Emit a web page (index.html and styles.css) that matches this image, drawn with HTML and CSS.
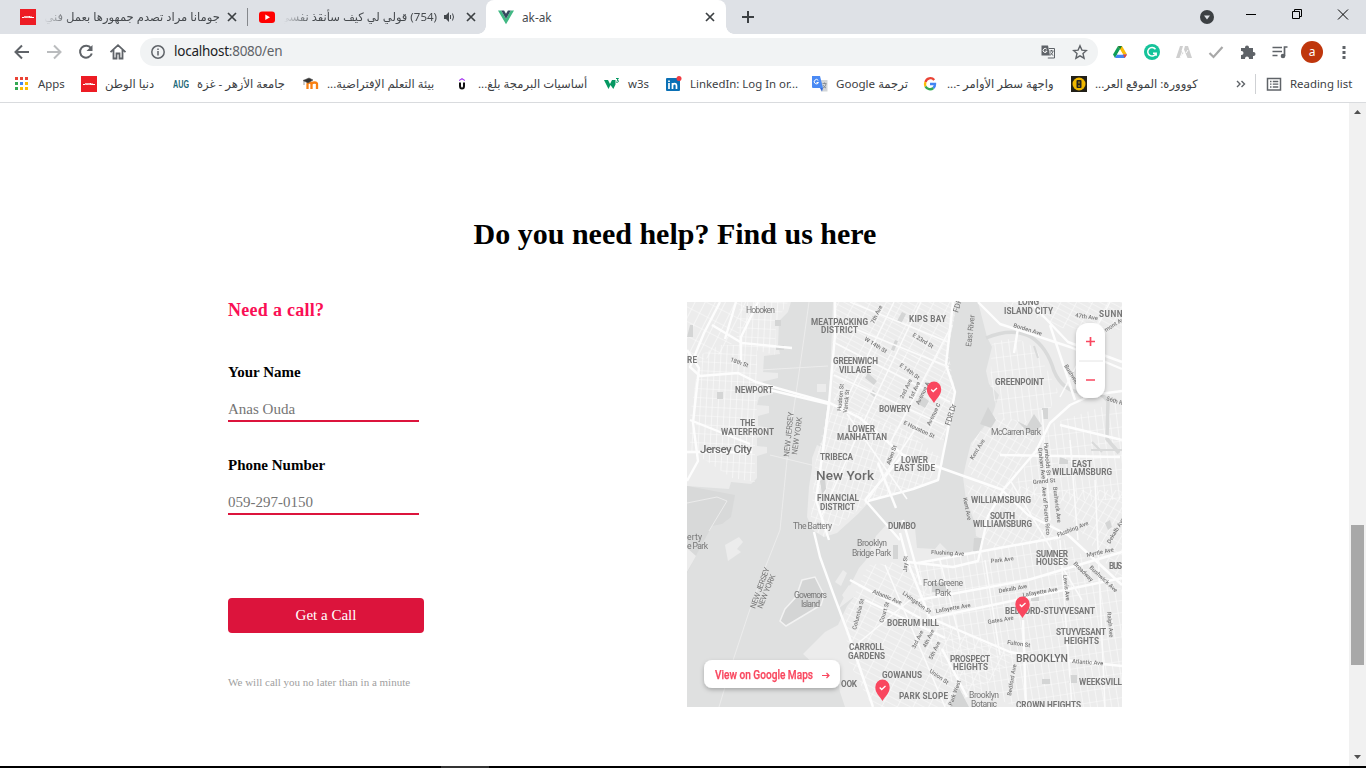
FILE: index.html
```html
<!DOCTYPE html>
<html lang="en">
<head>
<meta charset="utf-8">
<title>ak-ak</title>
<link rel="stylesheet" href="styles.css">
</head>
<body>
<div class="window">
  <header class="tabstrip">
    <div class="tab tab-one">
      <svg class="i16" viewBox="0 0 16 16"><rect width="16" height="16" fill="#ed1c24"/><path d="M2 8.500h2l1-1 1 1.200 1-1.200 1 1 1.500-1.500v1.500H14M4 8h8" stroke="#fff" fill="none"/></svg>
      <span class="tab-title" dir="rtl">جومانا مراد تصدم جمهورها بعمل فني</span>
      <svg class="x" viewBox="0 0 10 10"><path d="M1 1l8 8M9 1L1 9"/></svg>
    </div>
    <div class="tab tab-two">
      <svg class="i16" viewBox="0 0 16 16"><rect y="2.500" width="16" height="11.500" rx="3" fill="#f00"/><path d="M6.300 5.500v5.400l4.700-2.700z" fill="#fff"/></svg>
      <span class="tab-title" dir="rtl">(754) قولي لي كيف سأنقذ نفسي</span>
      <svg class="speaker" viewBox="0 0 12 12"><path d="M1 4h2l3-3v10L3 8H1z" fill="#45494d"/><path d="M7.500 4v4M9.500 2.500q2 3.500 0 7" stroke="#45494d" fill="none"/></svg>
      <svg class="x" viewBox="0 0 10 10"><path d="M1 1l8 8M9 1L1 9"/></svg>
    </div>
    <div class="tab tab-active">
      <svg class="i16" viewBox="0 0 16 16"><path d="M0 1.500h3.200L8 9.800l4.800-8.300H16L8 15.300z" fill="#41b883"/><path d="M3.200 1.500h2.900L8 4.800l1.900-3.300h2.900L8 9.800z" fill="#35495e"/></svg>
      <span class="tab-title">ak-ak</span>
      <svg class="x" viewBox="0 0 10 10"><path d="M1 1l8 8M9 1L1 9"/></svg>
    </div>
    <svg class="plus" viewBox="0 0 12 12"><path d="M6 0v12M0 6h12"/></svg>
    <div class="controls">
      <svg viewBox="0 0 46 34"><circle cx="23" cy="17" r="7" fill="#3c4043"/><path d="M20 15.500h6l-3 4z" fill="#dee1e6"/></svg>
      <svg viewBox="0 0 46 34"><path d="M18 14.500h10" stroke="#000"/></svg>
      <svg viewBox="0 0 46 34"><path d="M18.500 11.500h7v7h-7zM20.500 11v-1.500h7v7H26" stroke="#000" fill="none"/></svg>
      <svg viewBox="0 0 46 34"><path d="M18 9.500l10 10M28 9.500l-10 10" stroke="#000"/></svg>
    </div>
  </header>

  <div class="toolbar">
    <svg class="cell" viewBox="0 0 32 32"><path d="M23 16H10M16 9.500L9.500 16l6.500 6.500" class="nav"/></svg>
    <svg class="cell" viewBox="0 0 32 32"><path d="M9 16h13M16 9.500l6.500 6.500-6.500 6.500" class="nav off"/></svg>
    <svg class="cell" viewBox="0 0 32 32"><path d="M21 12.200a6 6 0 1 0 .8 5.300" class="nav"/><path d="M22.500 9v6h-6z" fill="#5f6368"/></svg>
    <svg class="cell" viewBox="0 0 32 32"><path d="M8.500 16.200L16 9.200l7.500 7M11.500 14v8.500h3v-5h3v5h3V14" class="nav thin"/></svg>
    <div class="omnibox">
      <svg class="info" viewBox="0 0 16 16"><circle cx="8" cy="8" r="6.200" fill="none" stroke="#5f6368" stroke-width="1.500"/><path d="M8 7v4.500M8 4.500v1.500" stroke="#5f6368" stroke-width="1.500"/></svg>
      <span class="url"><b>localhost</b>:8080/en</span>
      <svg class="omni-icon" viewBox="0 0 16 16"><path d="M1.500 1.500h6.500l2 10H1.500z" fill="#5f6368"/><path d="M8.800 4.500h5.700v9.500H7.800M9.500 7h4M11.500 6v1M13 7.300q-1 3-3 4M10.500 8.500q1 2 2.800 3" stroke="#5f6368" fill="none"/><path d="M6.700 5.200A2 2 0 1 0 7 7.200H5.300" stroke="#fff" fill="none"/></svg>
      <svg class="omni-icon" viewBox="0 0 16 16"><path d="M8 1.800l1.900 4.300 4.600.4-3.500 3.100 1.100 4.600L8 11.800l-4.100 2.400L5 9.600 1.500 6.500l4.600-.4z" fill="none" stroke="#5f6368" stroke-width="1.400"/></svg>
    </div>
    <svg class="cell" viewBox="0 0 32 32"><path d="M14 10h4l5 8.500h-4z" fill="#fbbc04"/><path d="M14 10l2 3.500-5 8.500-2-3.500z" fill="#0f9d58"/><path d="M13 18.500H23L20.700 22H11z" fill="#4285f4"/><path d="M14 10h4l-2 3.500z" fill="#188038"/><path d="M20.700 22L19 18.500h4z" fill="#ea4335"/><path d="M16 13.500l3 5h-6z" fill="#fff"/></svg>
    <svg class="cell" viewBox="0 0 32 32"><circle cx="16" cy="16" r="8" fill="#15c39a"/><path d="M19.500 13.200a4.300 4.300 0 1 0 .6 4H17M20.200 17.200v2.500" stroke="#fff" stroke-width="1.500" fill="none"/></svg>
    <svg class="cell" viewBox="0 0 32 32"><path d="M12 10h3l-1.500 5 2 2-2 2-1 3H8zM17 10h3l4 12h-4.500L16 13.500z" fill="#cfcfcf"/><path d="M15 14l-3 8M20 14l-2 3" stroke="#fff"/></svg>
    <svg class="cell" viewBox="0 0 32 32"><path d="M9.500 17l4 4L22.500 11" stroke="#a8a8a8" stroke-width="2.200" fill="none"/></svg>
    <svg class="cell" viewBox="0 0 32 32"><path d="M9 12h4v-.5a2 2 0 0 1 4 0v.5h4v4h.5a2 2 0 0 1 0 4H21v3h-4v-.5a2 2 0 0 0-4 0v.5H9v-4h.5a2 2 0 0 0 0-4H9z" fill="#5f6368"/></svg>
    <svg class="cell" viewBox="0 0 32 32"><path d="M8.500 11.500h9.500M8.500 15.500h9.500M8.500 19.500h5M20.500 20v-9h3" stroke="#5f6368" stroke-width="1.700" fill="none"/><circle cx="19" cy="20" r="2.300" fill="#5f6368"/></svg>
    <span class="avatar">a</span>
    <svg class="cell" viewBox="0 0 32 32"><path d="M14.500 10h3v3h-3zM14.500 15h3v3h-3zM14.500 20h3v3h-3z" fill="#5f6368"/></svg>
  </div>

  <nav class="bookmarks">
    <a class="bm"><svg class="i16" viewBox="0 0 16 16"><path d="M1 1h3v3H1zM6 1h3v3H6zM11 1h3v3h-3z" fill="#ea4335"/><path d="M1 6h3v3H1z" fill="#34a853"/><path d="M6 6h3v3H6z" fill="#4285f4"/><path d="M11 6h3v3h-3z" fill="#fbbc04"/><path d="M1 11h3v3H1z" fill="#34a853"/><path d="M6 11h3v3H6zM11 11h3v3h-3z" fill="#fbbc04"/></svg><span>Apps</span></a>
    <a class="bm"><svg class="i16" viewBox="0 0 16 16"><rect width="16" height="16" fill="#ed1c24"/><path d="M2 8.500h2l1-1 1 1.200 1-1.200 1 1 1.500-1.500v1.500H14M4 8h8" stroke="#fff" fill="none"/></svg><span dir="rtl">دنيا الوطن</span></a>
    <a class="bm"><svg class="i16" viewBox="0 0 16 16"><text x="0" y="12" textLength="16" lengthAdjust="spacingAndGlyphs" class="aug">AUG</text></svg><span dir="rtl">جامعة الأزهر - غزة</span></a>
    <a class="bm"><svg class="i16" viewBox="0 0 16 16"><path d="M4.500 13V8.500q0-2 2-2t2 2V13M8.500 8.500q0-2 3-2T14 9v4" stroke="#f98012" stroke-width="2.300" fill="none"/><path d="M0 4.500L6 2l4 2-5 3zM1 5v4" fill="#333" stroke="#555" stroke-width=".6"/></svg><span dir="rtl">بيئة التعلم الإفتراضية...</span></a>
    <a class="bm"><svg class="i16 udemy" viewBox="0 0 16 16"><path d="M3 5V4l3-2 3 2v1L6 3.500z" fill="#a435f0"/><path d="M4 6.500V10q0 2.500 2 2.500T8 10V6.500" stroke="#111" stroke-width="2" fill="none"/></svg><span dir="rtl">أساسيات البرمجة بلغ...</span></a>
    <a class="bm"><svg class="i16" viewBox="0 0 16 16"><path d="M0 4h4l2 4 2-4h3.500v4.500L9.300 13 6.500 9 4.500 13z" fill="#059862"/><path d="M12 2.500h2.500L13 4.200q2 0 1.300 1.600-.8 1-2.300.2" stroke="#059862" fill="none"/></svg><span>w3s</span></a>
    <a class="bm"><svg class="i16" viewBox="0 0 16 16"><rect y="2" width="14" height="13" rx="1" fill="#0b70b5"/><path d="M3 7v6M3 4.500V6M6.500 13V7M6.500 10q0-2.300 2-2.300t2 2.300v3" stroke="#fff" stroke-width="1.700" fill="none"/><circle cx="13" cy="2.500" r="2.500" fill="#f03b42"/></svg><span>LinkedIn: Log In or...</span></a>
    <a class="bm"><svg class="i16" viewBox="0 0 16 16"><path d="M7 4h8.500v11.500H9z" fill="#d2d5d8"/><path d="M0 0h8l3 12H1q-1 0-1-1z" fill="#4a8af4"/><path d="M8 12h3l-1 3.500z" fill="#3267d6"/><path d="M6.300 4.500a2.200 2.200 0 1 0 .2 2H4.500" stroke="#fff" fill="none"/><path d="M10.500 7.500h4M12.500 6.500v1M14 8q-.5 3-3 4M11 9q1 2 3 3" stroke="#788088" stroke-width=".8" fill="none"/></svg><span dir="rtl">ترجمة Google</span></a>
    <a class="bm"><svg class="i16" viewBox="0 0 16 16"><g fill="none" stroke-width="2.400"><path d="M11.200 4A5 5 0 0 0 2.500 6" stroke="#ea4335"/><path d="M2.500 6a5 5 0 0 0 0 4.500" stroke="#fbbc05"/><path d="M2.500 10.500A5 5 0 0 0 10.300 12" stroke="#34a853"/><path d="M10.300 12a5 5 0 0 0 1.700-4H7" stroke="#4285f4"/></g></svg><span dir="rtl">واجهة سطر الأوامر -...</span></a>
    <a class="bm"><svg class="i16" viewBox="0 0 16 16"><rect width="16" height="16" fill="#211f17"/><circle cx="8" cy="8" r="6.500" fill="#efb700"/><rect x="5.500" y="4" width="5" height="8" rx="1" fill="#222"/><path d="M8 5.500v2M8 9v2" stroke="#efb700"/></svg><span dir="rtl">كووورة: الموقع العر...</span></a>
    <svg class="more" viewBox="0 0 10 8"><path d="M1 1l3 3-3 3M5.500 1l3 3-3 3"/></svg>
    <a class="bm reading"><svg class="i16" viewBox="0 0 16 16"><rect x="1.500" y="2.500" width="13" height="11.500" fill="none" stroke="#5f6368" stroke-width="1.500"/><path d="M4 5.500h1.500M4 8.200h1.500M4 11h1.500M6.800 5.500h5.500M6.800 8.200h5.500M6.800 11h5.500" stroke="#5f6368" stroke-width="1.300"/></svg><span>Reading list</span></a>
  </nav>

  <div class="viewport">
    <main class="page">
      <h1 class="title">Do you need help? Find us here</h1>
      <div class="columns">
        <form class="form">
          <h2 class="need">Need a call?</h2>
          <label class="label" for="name">Your Name</label>
          <input class="field" id="name" placeholder="Anas Ouda">
          <label class="label" for="phone">Phone Number</label>
          <input class="field" id="phone" placeholder="059-297-0150">
          <button class="call" type="button">Get a Call</button>
          <p class="note">We will call you no later than in a minute</p>
        </form>
        <svg class="map" viewBox="687 301 435 406">
          <defs>
            <pattern id="nj" width="6" height="9" patternUnits="userSpaceOnUse" patternTransform="rotate(3)"><path d="M0 0H6M0 0V9" class="street"/></pattern>
            <pattern id="west" width="9" height="13" patternUnits="userSpaceOnUse" patternTransform="rotate(27)"><path d="M0 0H9M0 0V13" class="street"/></pattern>
            <pattern id="mid" width="14" height="5" patternUnits="userSpaceOnUse" patternTransform="rotate(28)"><path d="M0 0H14M0 0V5" class="street"/></pattern>
            <pattern id="low" width="6" height="8" patternUnits="userSpaceOnUse" patternTransform="rotate(18)"><path d="M0 0H6M0 0V8" class="street"/></pattern>
            <pattern id="green" width="7" height="14" patternUnits="userSpaceOnUse" patternTransform="rotate(-7)"><path d="M0 0H7M0 0V14" class="street"/></pattern>
            <pattern id="will" width="7" height="9" patternUnits="userSpaceOnUse" patternTransform="rotate(30)"><path d="M0 0H7M0 0V9" class="street"/></pattern>
            <pattern id="bed" width="7" height="12" patternUnits="userSpaceOnUse" patternTransform="rotate(-9)"><path d="M0 0H7M0 0V12" class="street"/></pattern>
            <pattern id="slope" width="14" height="6" patternUnits="userSpaceOnUse" patternTransform="rotate(27)"><path d="M0 0H14M0 0V6" class="street"/></pattern>
            <filter id="shadow" x="-20%" y="-20%" width="140%" height="160%"><feDropShadow dx="0" dy="2" stdDeviation="2" flood-color="#000" flood-opacity=".25"/></filter>
            <g id="pin"><path d="M0 11C-3 6-7.200 3-7.200-2.800A7.200 7.600 0 0 1 7.200-2.800C7.200 3 3 6 0 11z" fill="#f9475f"/><path d="M-2.800-2.500l2 2 3.800-3.500" stroke="#fff" stroke-width="1.300" fill="none"/></g>
          </defs>
          <g class="soft">
            <rect x="687" y="302" width="435" height="405" fill="#dfe0e0"/>
            <g fill="#ececec">
              <path d="M687 302H791L788 312 779 321 778 345 780 354 764 356 763 372 778 373V378L761 382V388L773 389V394L759 397 757 405 769 406V413L758 416V426L770 428V434L757 438V446L767 447V453L757 456V478L751 484 731 482 729 489 687 486z"/>
              <path d="M687 486L735 495 731 517 722 524 712 526 700 548 687 573z" fill="#d8d9d9"/>
              <path d="M687 548L696 556 687 572z"/>
              <path d="M833 302H957L948 350 946 365 954 383 955 397 950 420 944 440 943 463 936 481 925 486 898 491 871 500 858 514 837 533 824 537 814 531 807 517 809 487 812 468 812 458 817 445 824 448 829 403z"/>
              <path d="M978 302H1122V707H845L840 692 838 680 818 668 803 654 825 632 838 625 847 606 855 596 838 609 859 568 866 560 876 536 887 524 902 520 915 528 917 548 935 549 940 543 949 552 970 552 982 546 984 540 976 536 975 523 966 500 963 477 966 463 971 443 982 430 993 413 999 395 989 384 986 371 992 347 987 337z"/>
            </g>
            <path d="M687 302H760L726 352 687 365z" fill="url(#west)"/>
            <path d="M740 302H788L776 322 775 355 736 345zM720 345H757V410L705 440 690 415 700 355zM690 430L755 405 755 482 732 478 690 450z" fill="url(#nj)"/>
            <path d="M836 302H957L946 365 850 360 833 342z" fill="url(#mid)"/>
            <path d="M832 355H949L955 397 944 440 905 440 834 405z" fill="url(#mid)"/>
            <path d="M829 403L905 430 943 460 925 486 871 500 824 537 810 528 815 465z" fill="url(#low)"/>
            <path d="M992 344Q1018 331 1037 351L1058 391 1045 422 1000 420 990 385z" fill="url(#green)"/>
            <path d="M991 417L1045 423 1006 490 967 473 973 441z" fill="url(#will)"/>
            <path d="M1048 425L1122 400V500H1006z" fill="url(#green)"/>
            <path d="M966 485L1040 487 1059 540 990 550 975 520z" fill="url(#will)"/>
            <path d="M917 562L1060 536 1122 590V707H1018L951 682 920 625z" fill="url(#bed)"/>
            <path d="M1048 490H1122V584z" fill="url(#will)"/>
            <path d="M868 565L915 560 940 620 1018 656 960 707H872L848 660 845 615z" fill="url(#slope)"/>
            <path d="M1000 302H1122V330L1060 328z" fill="url(#mid)"/>
            <path d="M986 338Q1012 327 1031 337 1047 347 1054 371 1063 392 1082 392 1102 391 1108 401L1107 439 1119 453" fill="none" stroke="#d9dada" stroke-width="3.500"/>
            <path d="M1034 346l4 12M1092 442l10 10M1091 450h31" stroke="#d9dada" stroke-width="2"/>
            <g fill="#d4d5d5">
              <path d="M717 392h6v7h-6zM775 320h6v6h-6zM776 345h8v5h-8zM868 373l9 8-3 4-9-7zM873 390l4 4-3 3-4-4zM922 396l7 5-4 7-7-4zM988 407l-8 17 11 4 5-8zM1017 421l13 13 12-8-8-12-7 12z"/>
              <path d="M1042 408h6v11h-6zM1060 457l8 3v4h-9zM974 538h10l-4 16-7-3zM932 583h15v9h-15zM950 707l9-19 10 19zM1069 675h8v8h-8zM1031 596h8v5h-8zM1105 523l5-3 2 7-4 3zM1042 679h8v5h-8zM690 325h3v12h-6zM893 545h5v14h-5z"/>
              <path d="M802 580l13-3 9 18-3 10-20 12-15 9-6-5 5-12 11-12z"/>
              <path d="M901 324l5-10-4-2-5 9zM894 351l4-10-3-1-4 10zM820 481l5-4 1 12-4 5z"/>
            </g>
            <g fill="#ececec"><path d="M725 545l14-8 4 5-6 7 4 3-13 9zM817 384h9v8h-9zM835 582l8-12 4 3-6 13zM842 595l7-10 4 3-8 12z"/></g>
            <path d="M802 580l13-3 9 18-3 10-20 12-15 9-6-5 5-12 11-12z" fill="none" stroke="#f2f2f2" stroke-width="1.500"/>
            <path d="M809 302Q799 375 789 440 784 490 780 530 747 610 719 707M687 503l30-6 10 4-18 30M770 455l50 12M760 370l68-4" fill="none" stroke="#ededed" stroke-width=".9"/>
            <g class="road">
              <path d="M720 302L704 333 690 367 700 376 738 373 756 382 830 403 860 418 903 455 941 468 1003 490 1036 451 1050 423 1070 405 1092 395 1122 391"/>
              <path d="M756 387L774 391 829 404 823 450 816 500 829 540 M814 532L820 557 833 593 848 633 873 707"/>
              <path d="M953 302L946 365 955 392 946 440 938 480 913 489 868 501M835 302V335L829 403 823 450M865 500L900 540M878 463l18 45M903 455l-38 45"/>
              <path d="M687 350l12 18-6 55 5 38-11 20M712 325l30 18 50 5M736 302l-11 37M690 420l60 24M687 452h65M758 302l-17 35v25"/>
              <path d="M978 302l22 22 70 23 52 22M1018 328l-4 25M1003 491l25 24 40 20 54 50M1003 491l-15 25-10 45-25 6-45-5M900 533l8 30 22 55 80 34 35 6 77 8M918 563l142-26M920 618l-70-38M942 649l25 48M918 600l110-20 94-28M930 618l192-40M1023 620l3 87M865 600l80 38M903 520l18 65M1030 302l38 40 54 20M1050 325l25 75M1060 425l62 15M1000 455l120 2"/>
            </g>
            <path class="avenue" d="M840 412l54-110M863 423l58-121M889 445l63-120M833 342l117 60M838 322l111 45M850 302l98 40M834 375l110 50M868 500l50-75M862 425l-40 90M847 414l60 85M885 565l60 142M850 650l60-50M1010 480l72 120M1042 410l8 110M1070 440l8 100M1095 480l10 227M1060 540l12 167M940 560l20 80M985 560l15 95M1110 302l-50 95"/>
            <g class="lbl area">
              <text x="811" y="325" textLength="57">MEATPACKING</text><text x="821" y="333" textLength="37">DISTRICT</text>
              <text x="909" y="321.500" textLength="37">KIPS BAY</text><text x="1018" y="304.800" textLength="21">LONG</text><text x="1004" y="313.500" textLength="49">ISLAND CITY</text><text x="1099" y="316.500" textLength="29">SUNNY</text>
              <text x="687" y="362.500" textLength="10">RE</text><text x="833" y="364" textLength="45">GREENWICH</text><text x="839" y="372.500" textLength="32">VILLAGE</text>
              <text x="735" y="392.500" textLength="38">NEWPORT</text><text x="879" y="412" textLength="32">BOWERY</text><text x="995" y="384.500" textLength="49">GREENPOINT</text>
              <text x="740" y="426" textLength="15">THE</text><text x="721" y="434.500" textLength="53">WATERFRONT</text><text x="848" y="431.500" textLength="27">LOWER</text><text x="837" y="439.500" textLength="50">MANHATTAN</text>
              <text x="820" y="460" textLength="33">TRIBECA</text><text x="901" y="462.500" textLength="27">LOWER</text><text x="894" y="471" textLength="41">EAST SIDE</text><text x="1072" y="466.500" textLength="20">EAST</text><text x="1052" y="475" textLength="60">WILLIAMSBURG</text>
              <text x="817" y="501" textLength="42">FINANCIAL</text><text x="820" y="509.500" textLength="35">DISTRICT</text><text x="971" y="503" textLength="60">WILLIAMSBURG</text><text x="990" y="518.500" textLength="25">SOUTH</text><text x="973" y="527" textLength="59">WILLIAMSBURG</text>
              <text x="888" y="528.500" textLength="28">DUMBO</text><text x="1036" y="556.500" textLength="32">SUMNER</text><text x="1036" y="565" textLength="32">HOUSES</text><text x="1109" y="568.500" textLength="13">BUS</text>
              <text x="887" y="626" textLength="52">BOERUM HILL</text><text x="1005" y="613.500" textLength="90">BEDFORD-STUYVESANT</text><text x="1056" y="635" textLength="50">STUYVESANT</text><text x="1064" y="643.500" textLength="35">HEIGHTS</text>
              <text x="849" y="650" textLength="35">CARROLL</text><text x="848" y="658.500" textLength="37">GARDENS</text><text x="950" y="661.500" textLength="40">PROSPECT</text><text x="953" y="669.500" textLength="35">HEIGHTS</text><text x="882" y="678" textLength="40">GOWANUS</text><text x="841" y="687" textLength="16">OOK</text>
              <text x="899" y="699" textLength="49">PARK SLOPE</text><text x="1079" y="684.500" textLength="43">WEEKSVILL</text><text x="1016" y="707.500" textLength="65">CROWN HEIGHTS</text>
            </g>
            <g class="lbl city"><text x="700" y="453" font-size="11.500" textLength="52">Jersey City</text><text x="816" y="480" font-size="13.500" textLength="58">New York</text><text x="1016" y="662" font-size="10.500" textLength="52">BROOKLYN</text></g>
            <g class="lbl park">
              <text x="746" y="313" textLength="29">Hoboken</text><text x="991" y="434.500" textLength="50">McCarren Park</text><text x="793" y="529" textLength="39">The Battery</text><text x="857" y="545.500" textLength="30">Brooklyn</text><text x="852" y="555.500" textLength="39">Bridge Park</text><text x="687" y="539.500" textLength="15">erty</text><text x="687" y="549" textLength="21">e Park</text><text x="923" y="586" textLength="40">Fort Greene</text><text x="935" y="596" textLength="16">Park</text><text x="794" y="597.500" textLength="33">Governors</text><text x="801" y="606.500" textLength="19">Island</text><text x="969" y="698" textLength="30">Brooklyn</text><text x="971" y="707" textLength="26">Botanic</text>
            </g>
            <g class="lbl state">
              <text transform="translate(789 457) rotate(-84)" textLength="45">NEW JERSEY</text><text transform="translate(797 455) rotate(-82)" textLength="38">NEW YORK</text><text transform="translate(755 609) rotate(-70)" textLength="43">NEW JERSEY</text><text transform="translate(762 609) rotate(-68)" textLength="36">NEW YORK</text>
              <text transform="translate(971 347) rotate(-83)" textLength="32">East River</text><text transform="translate(950 426) rotate(-73)" textLength="22">FDR Dr</text><text transform="translate(958 313) rotate(-73)">FDR</text>
            </g>
            <g class="lbl st">
              <text transform="translate(730 361) rotate(20)">18th St</text><text transform="translate(874 324) rotate(-64)">7th Ave</text><text transform="translate(864 340) rotate(32)">W 14th St</text><text transform="translate(912 336) rotate(32)">E 23rd St</text><text transform="translate(899 366) rotate(36)">E 14th St</text><text transform="translate(903 399) rotate(-64)">2nd Ave</text><text transform="translate(912 400) rotate(-64)">1st Ave</text><text transform="translate(919 405) rotate(-64)">Avenue A</text><text transform="translate(930 426) rotate(-64)">Avenue C</text><text transform="translate(903 424) rotate(25)">E Houston St</text>
              <text transform="translate(841 411) rotate(-84)">Hudson St</text><text transform="translate(847 413) rotate(-84)">Varick St</text><text transform="translate(890 465) rotate(-70)">Allen St</text><text transform="translate(1013 327) rotate(17)">Borden Ave</text><text transform="translate(1075 317) rotate(8)">47th Ave</text><text transform="translate(1106 332) rotate(-32)">mont Ave</text><text transform="translate(1064 366) rotate(58)">Bushwick</text><text transform="translate(1106 400) rotate(18)">56th Rd</text>
              <text transform="translate(973 460) rotate(-58)">Kent Ave</text><text transform="translate(1044 443) rotate(85)">Humboldt St</text><text transform="translate(1038 448) rotate(83)">Graham Ave</text><text transform="translate(1033 484) rotate(-5)">Grand St</text><text transform="translate(1042 487) rotate(85)">Ave of Puerto Rico</text><text transform="translate(1053 487) rotate(83)">Bushwick Ave</text><text transform="translate(963 498) rotate(78)">Kent Ave</text><text transform="translate(1058 537) rotate(-22)">Flushing Ave</text><text transform="translate(1110 544) rotate(-59)">Dekalb Ave</text>
              <text transform="translate(931 554) rotate(3)">Flushing Ave</text><text transform="translate(991 563) rotate(-7)">Park Ave</text><text transform="translate(1087 557) rotate(-12)">Myrtle Ave</text><text transform="translate(1073 564) rotate(45)">Broadway</text><text transform="translate(1089 568) rotate(43)">Bushwick Ave</text><text transform="translate(999 593) rotate(-10)">Dekalb Ave</text><text transform="translate(1023 597) rotate(-10)">Lafayette Ave</text><text transform="translate(936 613) rotate(-10)">Lafayette Ave</text><text transform="translate(988 624) rotate(-10)">Gates Ave</text><text transform="translate(1063 575) rotate(83)">Lewis Ave</text><text transform="translate(1107 612) rotate(84)">Ralph Ave</text>
              <text transform="translate(902 594) rotate(36)">Livingston St</text><text transform="translate(872 593) rotate(22)">Atlantic Ave</text><text transform="translate(856 630) rotate(-75)">Columbia St</text><text transform="translate(883 623) rotate(-73)">Court St</text><text transform="translate(907 572) rotate(-88)">Jay St</text><text transform="translate(915 649) rotate(-64)">3rd Ave</text><text transform="translate(926 648) rotate(-64)">4th Ave</text><text transform="translate(932 660) rotate(-64)">5th Ave</text><text transform="translate(929 672) rotate(35)">Union St</text><text transform="translate(1007 644) rotate(8)">Fulton St</text><text transform="translate(1072 663) rotate(4)">Atlantic Ave</text><text transform="translate(1011 696) rotate(-80)">Bedford Ave</text><text transform="translate(952 706) rotate(-70)">Park West</text>
            </g>
            <g filter="url(#shadow)"><rect x="1076" y="323" width="29" height="75" rx="12" fill="#fff"/><rect x="704" y="660" width="136" height="28" rx="8" fill="#fff"/></g>
            <path d="M1079 361h24" stroke="#e4e4e4"/><path d="M1086 341.500h9M1090.500 337v9M1086 380h9" stroke="#f9475f" stroke-width="1.700"/>
            <text x="715" y="679" textLength="98" lengthAdjust="spacingAndGlyphs" class="view">View on Google Maps</text>
            <path d="M822 675.500h7M826.500 673l2.500 2.500-2.500 2.500" fill="none" stroke="#f9475f" stroke-width="1.200"/>
            <use href="#pin" x="934" y="392"/><use href="#pin" x="1022.500" y="607"/><use href="#pin" x="882.500" y="690"/>
          </g>
        </svg>
      </div>
    </main>
    <div class="scrollbar"><svg viewBox="0 0 17 17"><path d="M5 11h7L8.500 7z" fill="#505050"/></svg><i class="thumb"></i><svg viewBox="0 0 17 17"><path d="M5 6h7l-3.500 4z" fill="#505050"/></svg></div>
  </div>
  <footer class="taskbar"><i></i></footer>
</div>
</body>
</html>
```
FILE: styles.css
```css
* { box-sizing: border-box; }
body { margin: 0; background: #fff; overflow: hidden; font-family: "Liberation Serif", serif; }
.window { width: 1366px; height: 768px; display: flex; flex-direction: column; }
svg { display: block; flex: none; }
.i16 { width: 16px; height: 16px; }

.tabstrip { height: 34px; flex: none; background: #dee1e6; display: flex; align-items: center; font: 12px "Noto Sans", "DejaVu Sans", sans-serif; color: #45494d; }
.tab { height: 34px; display: flex; align-items: center; }
.tab-title { white-space: nowrap; overflow: hidden; height: 20px; line-height: 20px; }
.tab-one { width: 248px; padding-left: 20px; background: linear-gradient(#85888c, #85888c) right 8px / 1px 18px no-repeat; }
.tab-one .tab-title { width: 176px; margin: 0 7px 0 8px; font-size: 11.600px; }
.tab-two { width: 238px; padding-left: 11px; }
.tab-two .tab-title { width: 153px; margin: 0 6px 0 9px; font-size: 11.500px; }
.tab-one .tab-title, .tab-two .tab-title { mask-image: linear-gradient(to right, transparent, #000 28px); }
.speaker { width: 12px; height: 12px; margin-right: 11px; }
.tab-active { width: 240px; height: 34px; padding-left: 12px; background: #fff; border-radius: 8px 8px 0 0; position: relative; }
.tab-active::before, .tab-active::after { content: ""; position: absolute; bottom: 0; width: 8px; height: 8px; }
.tab-active::before { left: -8px; background: radial-gradient(circle at 0 0, #dee1e6 7.500px, #fff 8px); }
.tab-active::after { right: -8px; background: radial-gradient(circle at 100% 0, #dee1e6 7.500px, #fff 8px); }
.tab-active .tab-title { width: 175px; margin: 0 8px; font-size: 11.800px; }
.x { width: 10px; height: 10px; stroke: #3c4043; stroke-width: 1.700; }
.plus { width: 12px; height: 12px; margin-left: 16px; stroke: #3c4043; stroke-width: 2; }
.controls { margin-left: auto; display: flex; }
.controls svg { width: 46px; height: 34px; }
.controls svg:first-child { margin-right: -2px; }

.toolbar { height: 36px; flex: none; display: flex; align-items: center; padding: 0 6px; }
.cell { width: 32px; height: 32px; }
.nav { fill: none; stroke: #5f6368; stroke-width: 2; }
.off { stroke: #babcbe; }
.thin { stroke-width: 1.800; }
.omnibox { width: 958px; height: 28px; margin: 0 6px; padding: 0 10px; border-radius: 14px; background: #f1f3f4; display: flex; align-items: center; }
.info { width: 16px; height: 16px; margin-right: 8px; }
.url { flex: 1; color: #5f6368; font: 13.500px/19px "Noto Sans", sans-serif; letter-spacing: -.25px; padding-bottom: 1px; }
.url b { font-weight: 400; color: #202124; }
.omni-icon { width: 16px; height: 16px; margin-left: 16px; }
.avatar { width: 22px; height: 22px; margin: 0 5px; border-radius: 50%; background: #bf360c; color: #fff; text-align: center; font: 12px/21px "Noto Sans", sans-serif; }

.bookmarks { height: 33px; flex: none; border-bottom: 1px solid #d9dbde; padding-bottom: 5px; display: grid; grid-template-columns: 67px 92px 130px 151px 150px 62px 146px 111px 148px 165px 19px 112px; align-items: center; padding-left: 14px; color: #3c4043; font: 11.400px "Noto Sans", "DejaVu Sans", sans-serif; }
.bm { display: flex; align-items: center; gap: 8px; white-space: nowrap; height: 20px; }
.bm span[dir] { font-size: 11.600px; }
.udemy { margin-left: 2px; margin-right: -2px; }
.aug { font: bold 11px "Liberation Sans", sans-serif; fill: #1b6878; }
.more { width: 10px; height: 8px; fill: none; stroke: #5f6368; stroke-width: 1.400; }
.reading { border-left: 1px solid #cfd1d4; padding-left: 10px; }

.viewport { flex: 1; display: flex; min-height: 0; }
.page { width: 1349px; padding: 113px 227px 0 228px; }
.title { margin: 0; text-align: center; font-size: 30px; line-height: 36px; }
.columns { display: flex; justify-content: space-between; padding-top: 49px; }
.form { width: 196px; display: flex; flex-direction: column; align-items: flex-start; }
.need { margin: -1px 0 43px; font-size: 18px; letter-spacing: .28px; line-height: 20px; color: #fa0f55; }
.label { font-size: 15px; font-weight: bold; line-height: 18px; margin-bottom: 17px; }
.field { width: 191px; height: 24px; padding: 1px 0 0; margin-bottom: 34px; border: 0; border-bottom: 2px solid #dc143c; font: 15px "Liberation Serif", serif; }
.field::placeholder { color: #757575; }
.call { width: 196px; height: 35px; margin: 49px 0 43px; padding: 0; border: 0; border-radius: 4px; background: #dc143c; color: #fff; font: 15px "Liberation Serif", serif; }
.note { margin: 0; font-size: 11px; line-height: 13px; color: #a0a0a0; white-space: nowrap; }
.map { width: 435px; height: 406px; }
.soft { filter: blur(.35px); }
.street { stroke: #fcfcfc; stroke-width: 1.200; fill: none; }
.road { stroke: #fdfdfd; stroke-width: 2.400; fill: none; stroke-linejoin: round; }
.avenue { stroke: #fbfbfb; stroke-width: 1.500; fill: none; }
.lbl { font-family: Roboto, sans-serif; fill: #777; }
.area { font-size: 8.200px; font-weight: 700; }
.city { font-weight: 500; fill: #6c6c6c; }
.park { font-size: 8.600px; }
.state { font-size: 7.800px; }
.st { font-size: 5.800px; font-weight: 500; }
.view { font: 500 12px Roboto, sans-serif; fill: #f9475f; stroke: #f9475f; stroke-width: .25px; }

.scrollbar { width: 17px; background: #f1f1f1; display: flex; flex-direction: column; }
.scrollbar svg { width: 17px; height: 17px; }
.thumb { width: 13px; height: 140px; margin: 405px 2px auto; background: #a8a8a8; }
.taskbar { height: 2px; flex: none; background: #000; padding-left: 441px; }
.taskbar i { display: block; width: 48px; height: 2px; background: #333; }
```
